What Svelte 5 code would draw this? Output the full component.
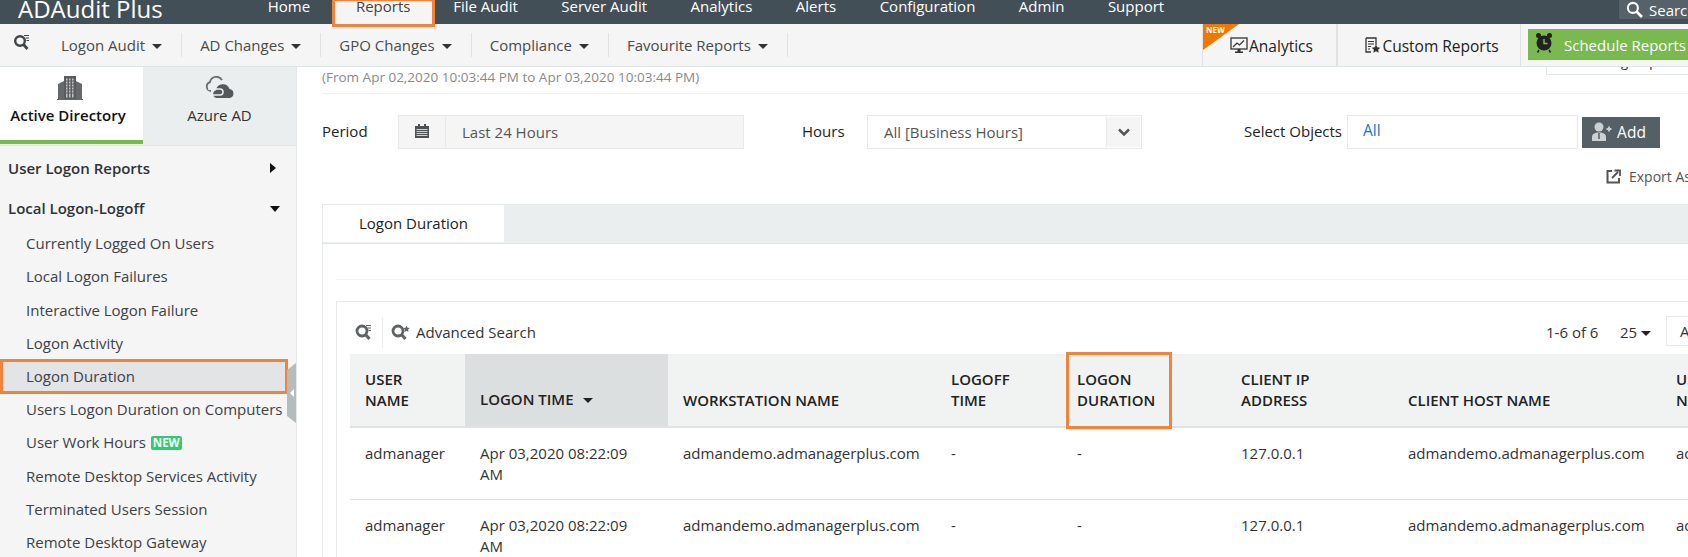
<script lang="ts">
  const nav = [
    { label: 'Home' },
    { label: 'Reports', active: true },
    { label: 'File Audit' },
    { label: 'Server Audit' },
    { label: 'Analytics' },
    { label: 'Alerts' },
    { label: 'Configuration' },
    { label: 'Admin' },
    { label: 'Support' }
  ];
  const menus = ['Logon Audit', 'AD Changes', 'GPO Changes', 'Compliance', 'Favourite Reports'];
  const reports = [
    'Currently Logged On Users',
    'Local Logon Failures',
    'Interactive Logon Failure',
    'Logon Activity',
    'Logon Duration',
    'Users Logon Duration on Computers',
    'User Work Hours',
    'Remote Desktop Services Activity',
    'Terminated Users Session',
    'Remote Desktop Gateway'
  ];
  const columns = [
    { label: 'USER NAME', width: 115, wrap: 'USER|NAME' },
    { label: 'LOGON TIME', width: 203, sorted: true },
    { label: 'WORKSTATION NAME', width: 268 },
    { label: 'LOGOFF TIME', width: 126, wrap: 'LOGOFF|TIME' },
    { label: 'LOGON DURATION', width: 164, wrap: 'LOGON|DURATION', marked: true },
    { label: 'CLIENT IP ADDRESS', width: 167, wrap: 'CLIENT IP|ADDRESS' },
    { label: 'CLIENT HOST NAME', width: 268 },
    { label: 'USER NAME', width: 120, wrap: 'USER|NAME' }
  ];
  const rows = [0, 1];
</script>

<div class="page">
  <header class="topbar">
    <div class="logo">ADAudit Plus</div>
    <nav class="nav">
      {#each nav as item}
        <a class="nav-item" class:active={item.active}>{item.label}</a>
      {/each}
    </nav>
    <div class="search">
      <svg width="17" height="17" viewBox="0 0 16 16"><circle cx="6.500" cy="6.500" r="4.700" fill="none" stroke="#fff" stroke-width="2" /><path d="M10 10l5 5" stroke="#fff" stroke-width="2.600" /></svg>
      <span>Search</span>
    </div>
  </header>

  <div class="toolbar">
    <svg class="tool-search" width="18" height="18" viewBox="0 0 18 18">
      <circle cx="7" cy="8" r="4.800" fill="none" stroke="#3f4447" stroke-width="2.400" />
      <path d="M10.500 11.500l4 4.500" stroke="#3f4447" stroke-width="2.800" />
      <path d="M11 2.500h5M12.500 5h3.500M13.500 7.500h2.500" stroke="#3f4447" stroke-width="1.100" />
    </svg>
    <div class="menus">
      {#each menus as menu}
        <div class="menu">{menu}<i class="caret"></i></div>
      {/each}
    </div>
    <div class="actions">
      <div class="action analytics">
        <span class="new-flag"><b>NEW</b></span>
        <svg width="18" height="17" viewBox="0 0 18 17">
          <rect x="1" y="1" width="16" height="11" fill="none" stroke="#333" stroke-width="1.300" />
          <path d="M3 10l4-4 2.500 2L14 3.500" fill="none" stroke="#333" stroke-width="1.200" />
          <path d="M7.500 12h3v2.500h-3zM5 14.500h8V16H5z" fill="#333" />
        </svg>
        <span>Analytics</span>
      </div>
      <div class="action custom">
        <svg width="17" height="17" viewBox="0 0 17 17">
          <path d="M2 1h10v7M7 15H2V1" fill="none" stroke="#333" stroke-width="1.300" />
          <path d="M4 4.500h6M4 7h6M4 9.500h3M4 12h2" stroke="#333" stroke-width="1.100" />
          <path d="M12 7.500l1.300 2.800 3 .4-2.200 2.100.6 3-2.700-1.500-2.700 1.500.6-3-2.200-2.100 3-.4z" fill="#333" />
        </svg>
        <span>Custom Reports</span>
      </div>
      <div class="schedule">
        <svg width="18" height="21" viewBox="0 0 18 21">
          <circle cx="9" cy="11" r="7.500" fill="#222" />
          <circle cx="3.500" cy="3.500" r="2.500" fill="#222" />
          <circle cx="14.500" cy="3.500" r="2.500" fill="#222" />
          <path d="M4 18l-1.500 2.500M14 18l1.500 2.500" stroke="#222" stroke-width="1.500" />
          <path d="M9 7v4.500h3.500" fill="none" stroke="#8bc34a" stroke-width="1.400" />
        </svg>
        <span>Schedule Reports</span>
      </div>
    </div>
  </div>

  <div class="body">
    <aside class="sidebar">
      <div class="side-tabs">
        <div class="side-tab selected">
          <svg width="26" height="25" viewBox="0 0 26 25">
            <path d="M1 24V9l6-3V24zM25 24V9l-6-3V24z" fill="#66696b" />
            <path d="M7 24V1h12V24z" fill="#5a5d5f" />
            <path d="M9 3.500h1.500v19H9zM12 3.500h1.500v19H12zM15 3.500h1.500v19H15z" fill="#bfc1c2" />
            <path d="M8 6h10M8 9h10M8 12h10M8 15h10M8 18h10" stroke="#5a5d5f" stroke-width="1" />
            <path d="M0 24h26v1H0z" fill="#66696b" />
          </svg>
          <span>Active Directory</span>
        </div>
        <div class="side-tab">
          <svg width="32" height="24" viewBox="0 0 32 24">
            <path d="M7 15a4.500 4.500 0 0 1-1-8.800 6.500 6.500 0 0 1 12-2.200" fill="none" stroke="#6a6d6f" stroke-width="1.800" />
            <path d="M13 22a4 4 0 0 1-1-7.800A7 7 0 0 1 25.500 13 4.600 4.600 0 0 1 26 22z" fill="#55585a" />
            <path d="M4 13h12a3 3 0 1 1 0 6H8" fill="none" stroke="#ebeeef" stroke-width="1.500" />
          </svg>
          <span>Azure AD</span>
        </div>
      </div>
      <div class="group first">User Logon Reports<i class="arrow-right"></i></div>
      <div class="group second">Local Logon-Logoff<i class="arrow-down"></i></div>
      <ul class="report-list">
        {#each reports as report}
          <li class:current={report === 'Logon Duration'}>
            {report}
            {#if report === 'User Work Hours'}<span class="new-tag">NEW</span>{/if}
          </li>
        {/each}
      </ul>
      <div class="collapse"><i></i></div>
    </aside>

    <main class="content">
      <div class="range-box"><span>group</span></div>
      <p class="range">(From Apr 02,2020 10:03:44 PM to Apr 03,2020 10:03:44 PM)</p>

      <div class="filters">
        <label class="period-label">Period</label>
        <div class="period">
          <span class="cal">
            <svg width="14" height="15" viewBox="0 0 14 15">
              <path d="M0 3h14v12H0z" fill="#4d5154" />
              <path d="M3 1h2v3H3zM9 1h2v3H9z" fill="#4d5154" />
              <path d="M1.500 6.500h11M1.500 8.500h11M1.500 10.500h11M1.500 12.500h11" stroke="#f4f4f4" stroke-width="0.800" />
            </svg>
          </span>
          <span class="period-text">Last 24 Hours</span>
        </div>
        <label class="hours-label">Hours</label>
        <div class="hours">
          <span class="hours-text">All [Business Hours]</span>
          <span class="hours-btn">
            <svg width="14" height="9" viewBox="0 0 14 9"><path d="M2 1.500l5 5 5-5" fill="none" stroke="#555" stroke-width="2.500" /></svg>
          </span>
        </div>
        <label class="objects-label">Select Objects</label>
        <div class="objects">All</div>
        <button class="add">
          <svg width="23" height="20" viewBox="0 0 21 20">
            <circle cx="8" cy="5" r="4.500" fill="#ccd0d2" />
            <path d="M1 19v-4c0-3 2.500-4.500 7-4.500s7 1.500 7 4.500v4z" fill="#ccd0d2" />
            <path d="M8 11v6" stroke="#555f66" stroke-width="1.500" />
            <path d="M15.500 7h5M18 4.500v5" stroke="#ccd0d2" stroke-width="1.800" />
          </svg>
          Add
        </button>
      </div>

      <div class="export">
        <svg width="15" height="15" viewBox="0 0 15 15">
          <path d="M6 2H1.500v11.500H13V9" fill="none" stroke="#555" stroke-width="2" />
          <path d="M6 9l6-6M8.500 1.500H14V7" fill="none" stroke="#555" stroke-width="1.800" />
        </svg>
        <span>Export As</span>
      </div>

      <div class="panel">
        <div class="panel-tabs"><div class="panel-tab">Logon Duration</div></div>
        <div class="panel-body">
          <div class="spacer"></div>
          <div class="grid-box">
            <div class="grid-tools">
              <svg width="18" height="18" viewBox="0 0 18 18">
                <circle cx="7" cy="8" r="5" fill="none" stroke="#5f6366" stroke-width="2.800" />
                <path d="M10.500 11.500l4 4.500" stroke="#5f6366" stroke-width="3" />
                <path d="M11 2.500h5M12.500 5h3.500M13.500 7.500h2.500" stroke="#5f6366" stroke-width="1.100" />
              </svg>
              <span class="tool-sep"></span>
              <svg width="19" height="18" viewBox="0 0 19 18">
                <circle cx="7" cy="8" r="5" fill="none" stroke="#5f6366" stroke-width="2.800" />
                <path d="M10.500 11.500l4 4.500" stroke="#5f6366" stroke-width="3" />
                <path d="M15.500 2.500l1 2.200 2.300.3-1.700 1.600.4 2.300-2-1.100-2 1.100.4-2.300-1.700-1.600 2.300-.3z" fill="#5f6366" />
              </svg>
              <span class="adv-label">Advanced Search</span>
              <span class="count">1-6 of 6</span>
              <span class="page-size">25<i class="caret dark"></i></span>
              <span class="page-box">A</span>
            </div>
            <table>
              <colgroup>
                {#each columns as col}<col style="width: {col.width}px" />{/each}
              </colgroup>
              <thead>
                <tr>
                  {#each columns as col}
                    <th class:sorted={col.sorted} class:marked={col.marked}>
                      {#if col.wrap}
                        {col.wrap.split('|')[0]}<br />{col.wrap.split('|')[1]}
                      {:else}
                        {col.label}{#if col.sorted}<i class="caret dark sort"></i>{/if}
                      {/if}
                    </th>
                  {/each}
                </tr>
              </thead>
              <tbody>
                {#each rows as row (row)}
                  <tr>
                    <td>admanager</td>
                    <td>Apr 03,2020 08:22:09<br />AM</td>
                    <td>admandemo.admanagerplus.com</td>
                    <td>-</td>
                    <td>-</td>
                    <td>127.0.0.1</td>
                    <td>admandemo.admanagerplus.com</td>
                    <td>admanager</td>
                  </tr>
                {/each}
              </tbody>
            </table>
          </div>
        </div>
      </div>
    </main>
  </div>
</div>

<style>
  :global(body) {
    margin: 0;
    background: #fff;
    overflow: hidden;
  }

  .page {
    width: 1688px;
    height: 557px;
    overflow: hidden;
    font-family: 'Open Sans', 'Liberation Sans', sans-serif;
    font-size: 15px;
    color: #222;
    display: flex;
    flex-direction: column;
  }

  /* top bar */
  .topbar {
    height: 24px;
    flex: none;
    background: #434f57;
    display: flex;
    color: #fff;
    position: relative;
    z-index: 3;
  }
  .logo {
    padding-left: 18px;
    font-size: 24px;
    line-height: 18px;
    height: 24px;
    overflow: hidden;
    flex: none;
    box-sizing: border-box;
    width: 246px;
  }
  .nav {
    display: flex;
  }
  .nav-item {
    height: 24px;
    line-height: 13px;
    padding: 0 21.75px;
    flex: none;
    box-sizing: border-box;
  }
  .nav-item.active {
    background: #f5f5f5;
    color: #444;
    height: 27px;
    padding: 0 22px 0 21px;
    margin: 0 -4px 0 0;
    border: 3px solid #f0843f;
    border-top-width: 1px;
    line-height: 11px;
  }
  .search {
    margin-left: auto;
    width: 69px;
    height: 19px;
    box-sizing: border-box;
    background: #566169;
    display: flex;
    align-items: center;
    gap: 6px;
    padding-left: 7px;
    white-space: nowrap;
    overflow: hidden;
    line-height: 12px;
    flex: none;
  }
  .search svg {
    flex: none;
  }

  /* toolbar */
  .toolbar {
    height: 43px;
    flex: none;
    box-sizing: border-box;
    background: #f5f5f5;
    border-bottom: 1px solid #dfe5e5;
    display: flex;
    align-items: center;
    position: relative;
    z-index: 2;
  }
  .tool-search {
    margin-left: 13px;
    margin-top: -6px;
    flex: none;
  }
  .menus {
    display: flex;
    margin-left: 12px;
    height: 24px;
    align-items: center;
  }
  .menu {
    padding: 0 19px 0 18px;
    height: 24px;
    line-height: 24px;
    border-right: 1px solid #dfe3e3;
    color: #4a4a4a;
    white-space: nowrap;
  }
  .caret {
    display: inline-block;
    margin-left: 7px;
    border-top: 5px solid #333;
    border-left: 5px solid transparent;
    border-right: 5px solid transparent;
    vertical-align: 2px;
  }
  .caret.dark {
    border-top-color: #222;
  }
  .actions {
    margin-left: auto;
    display: flex;
    height: 100%;
    align-items: stretch;
    width: 486px;
    flex: none;
  }
  .action {
    display: flex;
    align-items: center;
    justify-content: center;
    gap: 1px;
    box-sizing: border-box;
    font-size: 15.5px;
    color: #222;
    border-left: 1px solid #dfe3e3;
    position: relative;
    padding-top: 1px;
  }
  .analytics {
    width: 134px;
    padding-left: 12px;
    padding-right: 8px;
  }
  .custom {
    width: 185px;
    border-left: 2px solid #dfe3e3;
    border-right: 1px solid #dfe3e3;
    padding-left: 5px;
  }
  .new-flag {
    position: absolute;
    left: 0;
    top: 0;
    width: 0;
    height: 0;
    border-top: 26px solid #f07800;
    border-right: 36px solid transparent;
  }
  .new-flag b {
    position: absolute;
    left: 3px;
    top: -26px;
    font-size: 8px;
    line-height: 12px;
    color: #fff;
    font-weight: 700;
  }
  .schedule {
    margin: 5px 0 6px 7px;
    flex: 1;
    background: #7ab950;
    color: #fff;
    display: flex;
    align-items: center;
    padding-left: 7px;
    gap: 11px;
    white-space: nowrap;
    overflow: hidden;
  }
  .schedule svg {
    margin-top: -4px;
    flex: none;
  }

  /* main area */
  .body {
    flex: 1;
    display: flex;
    min-height: 0;
  }
  .sidebar {
    width: 297px;
    flex: none;
    box-sizing: border-box;
    background: #f5f5f5;
    border-right: 1px solid #e3e7e7;
    position: relative;
  }
  .side-tabs {
    display: flex;
    height: 79px;
    background: #ebeeef;
    border-bottom: 1px solid #e3e7e7;
    box-sizing: border-box;
  }
  .side-tab {
    flex: 1;
    display: flex;
    flex-direction: column;
    align-items: center;
    padding-top: 8px;
    box-sizing: border-box;
    color: #333;
    height: 77px;
  }
  .side-tab svg {
    margin-top: 1px;
  }
  .side-tab span {
    margin-top: 5px;
  }
  .side-tab.selected {
    flex: none;
    width: 143px;
    background: #fff;
    color: #111;
    font-weight: 600;
    border-bottom: 4px solid #7ab950;
  }
  .side-tab.selected svg {
    margin: 0 3px 0 0;
  }
  .side-tab.selected span {
    margin-right: 7px;
  }
  .group {
    padding-left: 8px;
    font-weight: 600;
    color: #2f3336;
    position: relative;
    line-height: 20px;
  }
  .group.first {
    margin-top: 12px;
  }
  .group.second {
    margin-top: 20px;
  }
  .arrow-right {
    position: absolute;
    left: 270px;
    top: 5px;
    border-left: 6px solid #111;
    border-top: 5px solid transparent;
    border-bottom: 5px solid transparent;
  }
  .arrow-down {
    position: absolute;
    left: 270px;
    top: 8px;
    border-top: 6px solid #111;
    border-left: 5px solid transparent;
    border-right: 5px solid transparent;
  }
  .report-list {
    list-style: none;
    margin: 9px 0 0;
    padding: 0;
  }
  .report-list li {
    height: 33.25px;
    line-height: 33px;
    padding-left: 26px;
    color: #3c4247;
    white-space: nowrap;
    box-sizing: border-box;
  }
  .report-list li.current {
    width: 288px;
    height: 35px;
    margin-bottom: -1px;
    margin-top: -1px;
    background: #e3e4e6;
    border: 3px solid #f0843f;
    padding-left: 23px;
    line-height: 29px;
  }
  .new-tag {
    display: inline-block;
    background: #2ecc71;
    color: #fff;
    font-size: 11.5px;
    font-weight: 700;
    line-height: 14px;
    width: 31px;
    text-align: center;
    border-radius: 2px;
    margin-left: 1px;
    vertical-align: 1px;
  }
  .collapse {
    position: absolute;
    left: 287px;
    top: 296px;
    width: 9px;
    height: 60px;
    background: #b5bcbc;
    clip-path: polygon(0 7px, 100% 0, 100% 100%, 0 calc(100% - 7px));
  }
  .collapse i {
    position: absolute;
    left: 3px;
    top: 26px;
    border-right: 4px solid #fff;
    border-top: 4px solid transparent;
    border-bottom: 4px solid transparent;
  }

  .content {
    flex: 1;
    min-width: 0;
    padding-left: 25px;
    position: relative;
  }
  .range-box {
    position: absolute;
    left: 1249px;
    top: -6px;
    width: 200px;
    height: 14px;
    border: 1px solid #e3e7e7;
    background: #fff;
    box-sizing: border-box;
    padding-left: 74px;
    font-size: 13px;
    line-height: 1px;
    overflow: hidden;
  }
  .range {
    margin: 0;
    height: 26px;
    border-bottom: 1px solid #f1f3f3;
    font-size: 13.5px;
    line-height: 20px;
    color: #8a8a8a;
  }
  .filters {
    display: flex;
    align-items: center;
    height: 34px;
    margin-top: 21px;
    position: relative;
  }
  .filters label {
    color: #222;
    margin-top: -3px;
    flex: none;
  }
  .period-label {
    width: 76px;
    box-sizing: border-box;
  }
  .period {
    width: 346px;
    height: 34px;
    box-sizing: border-box;
    display: flex;
    background: #f5f5f5;
    border: 1px solid #e6eaea;
    flex: none;
  }
  .cal {
    width: 47px;
    box-sizing: border-box;
    border-right: 1px solid #e6eaea;
    display: flex;
    align-items: center;
    justify-content: center;
    padding-bottom: 4px;
  }
  .period-text {
    padding-left: 16px;
    line-height: 32px;
    color: #555;
  }
  .hours-label {
    margin-left: 58px;
    width: 65px;
  }
  .hours {
    width: 275px;
    height: 34px;
    box-sizing: border-box;
    border: 1px solid #e6eaea;
    display: flex;
    justify-content: space-between;
    flex: none;
  }
  .hours-text {
    padding-left: 16px;
    line-height: 32px;
    color: #555;
  }
  .hours-btn {
    width: 34px;
    margin: 1px;
    border-left: 1px solid #e6eaea;
    background: #f5f5f5;
    display: flex;
    align-items: center;
    justify-content: center;
    box-sizing: border-box;
  }
  .objects-label {
    margin-left: 102px;
    width: 103px;
  }
  .objects {
    width: 231px;
    height: 34px;
    box-sizing: border-box;
    border: 1px solid #e6eaea;
    color: #1276c9;
    padding-left: 15px;
    line-height: 29px;
    font-size: 15.5px;
    flex: none;
  }
  .add {
    margin-left: 4px;
    width: 78px;
    height: 31px;
    background: #555f66;
    color: #fff;
    border: 0;
    font: inherit;
    font-size: 15.5px;
    display: flex;
    align-items: center;
    justify-content: center;
    gap: 4px;
    padding: 0 6px 0 0;
    flex: none;
  }
  .export {
    display: flex;
    align-items: center;
    gap: 8px;
    margin-top: 17px;
    margin-left: 1284px;
    height: 20px;
    white-space: nowrap;
    color: #555;
    font-size: 14px;
  }
  .export svg {
    flex: none;
  }
  .panel {
    margin-top: 18px;
    border-left: 1px solid #e6eaea;
    border-top: 1px solid #e6eaea;
  }
  .panel-tabs {
    height: 39px;
    box-sizing: border-box;
    background: #ebeeef;
    border-bottom: 1px solid #e1e5e5;
  }
  .panel-tab {
    width: 181px;
    height: 37px;
    background: #fff;
    text-align: center;
    line-height: 37px;
    color: #222;
  }
  .panel-body {
    padding-left: 13px;
  }
  .spacer {
    height: 35px;
    border-bottom: 1px solid #f1f3f3;
  }
  .grid-box {
    margin-top: 21px;
    border-left: 1px solid #e6eaea;
    border-top: 1px solid #e6eaea;
  }
  .grid-tools {
    height: 52px;
    display: flex;
    align-items: center;
    padding-left: 18px;
    padding-top: 8px;
    box-sizing: border-box;
    position: relative;
  }
  .grid-tools svg {
    flex: none;
  }
  .tool-sep {
    width: 1px;
    height: 31px;
    background: #eef0f0;
    margin: 0 8px 0 9px;
    flex: none;
  }
  .adv-label {
    margin-left: 6px;
    color: #333;
  }
  .count {
    position: absolute;
    left: 1209px;
    top: 20px;
    color: #333;
  }
  .page-size {
    position: absolute;
    left: 1283px;
    top: 20px;
    color: #333;
  }
  .page-size .caret {
    margin-left: 4px;
  }
  .page-box {
    position: absolute;
    left: 1329px;
    top: 14px;
    width: 60px;
    height: 30px;
    border: 1px solid #e6eaea;
    box-sizing: border-box;
    padding-left: 13px;
    line-height: 28px;
    color: #333;
  }
  table {
    margin-left: 13px;
    border-collapse: collapse;
    table-layout: fixed;
    width: 1431px;
  }
  th {
    background: #f1f3f3;
    text-align: left;
    vertical-align: bottom;
    font-weight: 600;
    line-height: 21px;
    color: #222;
    height: 73px;
    padding: 0 15px 15px;
    box-sizing: border-box;
    border-bottom: 2px solid #dfe3e3;
    white-space: nowrap;
    position: relative;
  }
  th.sorted {
    background: #dcdfe0;
    padding-bottom: 16px;
  }
  th.marked::after {
    content: '';
    position: absolute;
    left: 4px;
    top: -2px;
    width: 106px;
    height: 77px;
    box-sizing: border-box;
    border: 3px solid #f0843f;
  }
  .sort {
    margin-left: 9px;
    vertical-align: 2px;
  }
  td {
    vertical-align: top;
    padding: 15px 15px 14px;
    line-height: 21px;
    color: #333;
    border-bottom: 1px solid #e1e4e4;
    height: 72px;
    box-sizing: border-box;
  }
</style>
